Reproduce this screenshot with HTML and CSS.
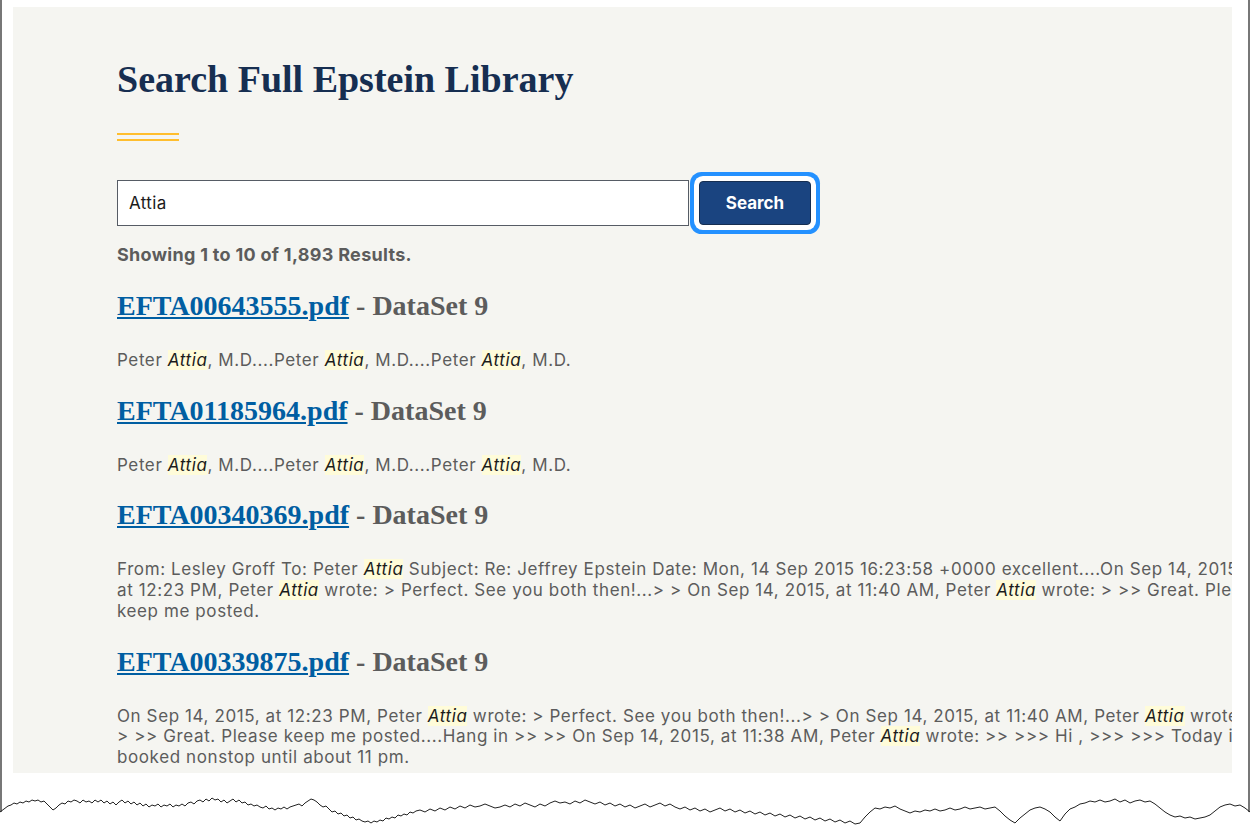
FILE: index.html
```html
<!DOCTYPE html>
<html lang="en">
<head>
    <meta charset="UTF-8">
    <meta name="viewport" content="width=device-width, initial-scale=1.0">
    <title>Search Full Epstein Library</title>
    <link rel="stylesheet" href="styles.css">
</head>
<body>
    <div class="frame">
        <main class="panel">
            <h1>Search Full Epstein Library</h1>
            <div class="gold-rule"></div>

            <!-- Search box -->
            <form class="search-form" onsubmit="return false;">
                <input type="text" class="search-input" value="Attia" aria-label="Search">
                <button type="submit" class="search-button">Search</button>
            </form>

            <p class="result-count">Showing 1 to 10 of 1,893 Results.</p>

            <!-- Results -->
            <div class="result">
                <h2><a href="#">EFTA00643555.pdf</a> - DataSet 9</h2>
                <p class="snippet">Peter <mark>Attia</mark>, M.D....Peter <mark>Attia</mark>, M.D....Peter <mark>Attia</mark>, M.D.</p>
            </div>
            <div class="result">
                <h2><a href="#">EFTA01185964.pdf</a> - DataSet 9</h2>
                <p class="snippet">Peter <mark>Attia</mark>, M.D....Peter <mark>Attia</mark>, M.D....Peter <mark>Attia</mark>, M.D.</p>
            </div>
            <div class="result">
                <h2><a href="#">EFTA00340369.pdf</a> - DataSet 9</h2>
                <p class="snippet">From: Lesley Groff To: Peter <mark>Attia</mark> Subject: Re: Jeffrey Epstein Date: Mon, 14 Sep 2015 16:23:58 +0000 excellent....On Sep 14, 2015,<br>at 12:23 PM, Peter <mark>Attia</mark> wrote: &gt; Perfect. See you both then!...&gt; &gt; On Sep 14, 2015, at 11:40 AM, Peter <mark>Attia</mark> wrote: &gt; &gt;&gt; Great. Please<br>keep me posted.</p>
            </div>
            <div class="result">
                <h2><a href="#">EFTA00339875.pdf</a> - DataSet 9</h2>
                <p class="snippet">On Sep 14, 2015, at 12:23 PM, Peter <mark>Attia</mark> wrote: &gt; Perfect. See you both then!...&gt; &gt; On Sep 14, 2015, at 11:40 AM, Peter <mark>Attia</mark> wrote:<br>&gt; &gt;&gt; Great. Please keep me posted....Hang in &gt;&gt; &gt;&gt; On Sep 14, 2015, at 11:38 AM, Peter <mark>Attia</mark> wrote: &gt;&gt; &gt;&gt;&gt; Hi , &gt;&gt;&gt; &gt;&gt;&gt; Today is<br>booked nonstop until about 11 pm.</p>
            </div>
        </main>
    </div>

    <!-- torn paper edge -->
    <svg class="tear" viewBox="0 0 1250 43" preserveAspectRatio="none">
        <line x1="1" y1="0" x2="1" y2="22" stroke="#777" stroke-width="2"/>
        <line x1="1249" y1="0" x2="1249" y2="22" stroke="#777" stroke-width="2"/>
        <polyline fill="none" stroke="#222" stroke-width="1" points="0,22 4,19 8,16 11,15 14,13 17,14 20,12 23,13 26,11 29,12 32,10 35,11 38,10 41,12 44,11 47,14 50,17 53,20 56,18 59,15 62,13 65,14 68,11 71,12 74,10 77,11 80,13 83,10 86,12 89,11 92,13 95,10 98,12 101,10 104,13 107,11 110,14 113,12 116,15 119,12 122,10 125,13 128,11 131,14 134,12 137,15 140,13 143,16 146,14 149,17 152,15 155,16 158,14 161,17 164,15 167,16 170,14 173,17 176,15 179,16 182,14 185,16 188,13 191,12 194,14 197,11 200,10 203,12 206,9 209,11 212,8 215,10 218,9 221,12 224,10 227,13 230,11 233,9 236,12 239,10 242,13 245,12 248,15 251,14 254,16 257,15 260,17 263,18 266,16 269,19 272,18 275,20 278,18 281,19 284,17 287,19 290,17 293,16 296,15 299,14 302,16 305,13 308,11 311,9 314,10 317,12 320,15 323,17 326,16 329,19 332,22 335,21 338,24 341,23 344,26 347,25 350,28 353,27 356,30 359,29 362,31 365,32 368,31 371,33 374,31 377,32 380,30 383,31 386,28 389,29 392,27 395,28 398,25 401,26 404,24 407,25 410,22 413,23 416,21 420,20 425,22 430,19 435,21 440,18 445,20 450,17 455,19 460,16 465,18 470,15 475,17 480,16 485,14 490,16 495,18 500,17 505,15 510,17 515,14 520,16 525,13 530,15 535,17 540,14 545,16 550,13 555,11 560,13 565,12 570,14 575,11 580,13 585,10 590,12 595,14 600,12 605,15 610,13 615,16 620,14 625,17 630,15 635,18 640,16 645,14 650,17 655,15 660,13 665,16 670,14 675,17 680,19 685,17 690,20 695,18 700,21 705,19 710,22 715,20 720,18 725,21 730,19 735,22 740,20 745,23 750,21 755,24 760,22 765,25 770,23 775,26 780,24 785,27 790,25 795,28 800,26 805,29 810,27 815,30 820,28 825,31 830,29 835,32 840,30 845,33 850,31 855,34 860,33 865,27 870,22 875,18 880,19 885,17 890,18 895,16 900,19 905,21 910,23 915,21 920,22 925,20 930,21 935,19 940,21 945,20 950,18 955,20 960,19 965,17 970,19 975,18 980,17 985,19 990,18 995,17 1000,21 1005,26 1010,30 1015,33 1020,28 1025,24 1030,20 1035,18 1040,17 1045,19 1050,22 1055,27 1060,31 1065,24 1070,19 1075,17 1080,14 1085,13 1090,11 1095,12 1100,10 1105,12 1110,11 1115,9 1120,12 1125,10 1130,13 1135,11 1140,10 1145,12 1150,11 1155,14 1160,18 1165,22 1170,25 1175,27 1180,26 1185,28 1190,27 1195,29 1200,28 1205,27 1210,25 1215,21 1220,17 1225,15 1230,14 1235,16 1240,15 1245,18 1250,22"/>
    </svg>
</body>
</html>
```

FILE: styles.css
```css
body {
    margin: 0;
    background: #fff;
    font-family: Inter, "Liberation Sans", Arial, sans-serif;
}
.frame {
    height: 790px;
    box-sizing: border-box;
    border-left: 2px solid #777;
    border-right: 2px solid #777;
    padding: 7px 16px 0 11px;
}
.panel {
    height: 766px;
    box-sizing: border-box;
    background-color: #f5f5f1;
    padding: 49px 0 0 104px;
    overflow: hidden;
}
h1 {
    margin: 0;
    font-family: "Liberation Serif", "Times New Roman", serif;
    font-size: 38px;
    line-height: 46px;
    font-weight: bold;
    color: #162e51;
}
.gold-rule {
    width: 62px;
    height: 4px;
    margin-top: 31px;
    border-top: 2px solid #ffbe2e;
    border-bottom: 2px solid #ffbe2e;
}
.search-form {
    display: flex;
    align-items: center;
    margin-top: 39px;
}
.search-input {
    width: 572px;
    height: 46px;
    box-sizing: border-box;
    border: 1px solid #565c65;
    border-radius: 0;
    padding: 0 11px;
    background: #fff;
    font-family: Inter, "Liberation Sans", Arial, sans-serif;
    font-size: 17px;
    letter-spacing: 0.4px;
    color: #1b1b1b;
}
.search-button {
    margin-left: 10px;
    width: 112px;
    height: 44px;
    border: 1px solid #162e51;
    border-radius: 4px;
    background-color: #1a4480;
    color: #fff;
    font-family: Inter, "Liberation Sans", Arial, sans-serif;
    font-size: 17px;
    font-weight: bold;
    box-shadow: 0 0 0 5px #fff, 0 0 0 9px #2491ff;
}
.result-count {
    margin: 17px 0 0;
    font-size: 18px;
    line-height: 24px;
    font-weight: bold;
    letter-spacing: 0.3px;
    color: #5c5c5c;
}
.result h2 {
    margin: 23px 0 0;
    font-family: "Liberation Serif", "Times New Roman", serif;
    font-size: 28px;
    line-height: 32px;
    font-weight: bold;
    color: #5c5c5c;
    white-space: nowrap;
}
.result + .result h2 {
    margin-top: 24px;
}
.result h2 a {
    color: #005ea2;
    text-decoration: underline;
}
.snippet {
    margin: 28px 0 0;
    font-size: 17px;
    line-height: 20.7px;
    letter-spacing: 0.6px;
    color: #5c5c5c;
    white-space: nowrap;
}
mark {
    background-color: #fffcd9;
    color: #1b1b1b;
    font-style: italic;
}
.tear {
    display: block;
    width: 1250px;
    height: 43px;
}
```
